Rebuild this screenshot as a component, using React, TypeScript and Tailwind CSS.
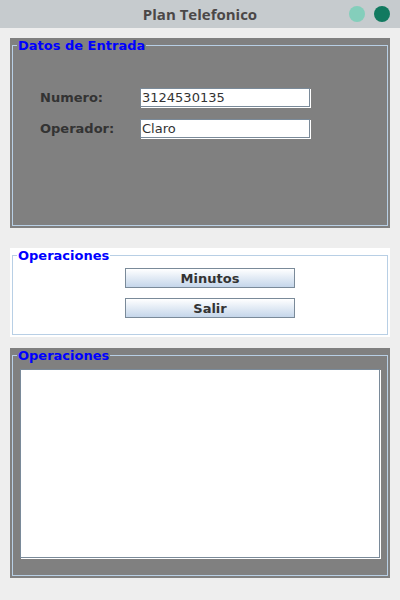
import React from 'react';

const font = { fontFamily: '"DejaVu Sans", "Liberation Sans", sans-serif' };

function Field({ value }: { value: string }) {
  return (
    <div className="w-[170px] h-[19px] bg-white border border-[#7a8a99] shadow-[1px_1px_0_#ffffff] flex items-center pl-[1px] text-[13px] text-[#333333]">
      {value}
    </div>
  );
}

function Btn({ label }: { label: string }) {
  return (
    <button className="w-[170px] h-[20px] border border-[#7a8a99] bg-gradient-to-b from-white to-[#c5d6ea] text-[13px] font-bold text-[#333333] leading-none">
      {label}
    </button>
  );
}

function Legend({ text }: { text: string }) {
  return (
    <legend className="ml-[4px] px-[1px] text-[13px] font-bold text-[#0000ff] leading-[15px]">{text}</legend>
  );
}

export default function App() {
  return (
    <div className="w-[400px] h-[600px] bg-[#eeeeee] flex flex-col" style={font}>
      {/* title bar */}
      <div className="h-[28px] bg-[#c6cbce] flex items-center relative">
        <span
          className="w-full text-center text-[15px] font-bold text-[#4b4747]"
          style={{ fontFamily: '"Open Sans", "DejaVu Sans", sans-serif' }}
        >
          Plan Telefonico
        </span>
        <div className="absolute right-[10px] top-[6px] flex gap-[9px]">
          <div className="w-[16px] h-[16px] rounded-full bg-[#84cebb]" />
          <div className="w-[16px] h-[16px] rounded-full bg-[#127a60]" />
        </div>
      </div>

      {/* Datos de Entrada */}
      <div className="mx-[10px] mt-[10px] h-[190px] bg-[#808080] px-[2px] pb-[2px]">
        <fieldset className="h-full border border-[#b8cfe5]">
          <Legend text="Datos de Entrada" />
          <div className="pl-[27px] pt-[35px] flex flex-col gap-[11px]">
            <div className="flex items-center">
              <span className="w-[100px] text-[13px] font-bold text-[#333333]">Numero:</span>
              <Field value="3124530135" />
            </div>
            <div className="flex items-center">
              <span className="w-[100px] text-[13px] font-bold text-[#333333]">Operador:</span>
              <Field value="Claro" />
            </div>
          </div>
        </fieldset>
      </div>

      {/* Operaciones buttons */}
      <div className="mx-[10px] mt-[20px] h-[89px] bg-white px-[2px] pb-[2px]">
        <fieldset className="h-full border border-[#b8cfe5]">
          <Legend text="Operaciones" />
          <div className="pl-[112px] pt-[5px] flex flex-col gap-[10px]">
            <Btn label="Minutos" />
            <Btn label="Salir" />
          </div>
        </fieldset>
      </div>

      {/* Operaciones output */}
      <div className="mx-[10px] mt-[11px] h-[230px] bg-[#808080] px-[2px] pb-[2px]">
        <fieldset className="h-full border border-[#b8cfe5]">
          <Legend text="Operaciones" />
          <div className="px-[7px] pt-[6px]">
            <textarea
              readOnly
              className="block w-[360px] h-[189px] bg-white border border-[#7a8a99] shadow-[1px_1px_0_#ffffff] resize-none outline-none"
            />
          </div>
        </fieldset>
      </div>
    </div>
  );
}
